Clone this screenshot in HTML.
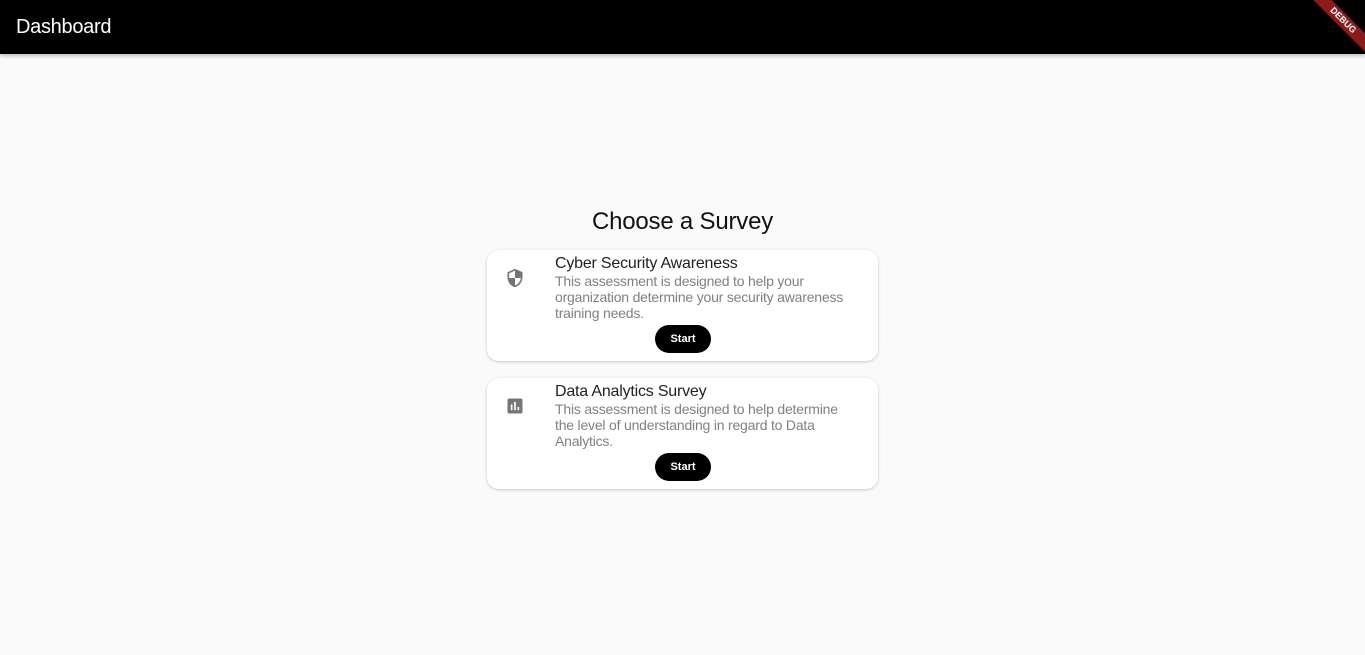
<!DOCTYPE html>
<html><head><style>
body{margin:0;width:1365px;height:655px;background:#fafafa;font-family:"Liberation Sans",sans-serif;overflow:hidden;position:relative}
.bar{position:absolute;left:0;top:0;width:1365px;height:54px;background:#000;box-shadow:0 2px 4px rgba(0,0,0,.25)}
.bar span{position:absolute;left:16px;top:16px;color:#fff;font-size:20px;letter-spacing:-0.3px}
.ribbon{position:absolute;right:-28px;top:14px;width:100px;height:13px;background:#8b1a1a;transform:rotate(45deg);color:#fff;font-size:9px;font-weight:bold;text-align:center;line-height:13px}
h1{position:absolute;left:0;width:1365px;top:208px;margin:0;text-align:center;font-weight:normal;font-size:24px;color:#111;letter-spacing:-0.2px}
.card{position:absolute;left:487px;width:391px;height:111px;background:#fff;border-radius:12px;box-shadow:0 1px 3px rgba(0,0,0,.2)}
.t{position:absolute;left:68px;top:5px;font-size:16px;color:#222;letter-spacing:-0.2px}
.d{position:absolute;left:68px;top:23px;width:305px;font-size:14px;line-height:16px;color:#808080;letter-spacing:-0.2px}
.btn{position:absolute;left:168px;top:75px;width:56px;height:28px;border-radius:14px;background:#000;color:#fff;font-size:11px;font-weight:bold;text-align:center;line-height:28px}
svg{position:absolute;left:18px;top:17px}
</style></head><body>
<div class="bar"><span>Dashboard</span></div>
<div class="ribbon">DEBUG</div>
<h1>Choose a Survey</h1>
<div class="card" style="top:250px">
<svg width="20" height="22" viewBox="0 0 24 24"><path d="M12 1L3 5v6c0 5.5 3.8 10.7 9 12 5.2-1.3 9-6.5 9-12V5l-9-4zm0 11h7c-.5 4.1-3.3 7.8-7 8.9V12H5V6.3l7-3.1V12z" fill="#757575"/></svg>
<div class="t">Cyber Security Awareness</div>
<div class="d">This assessment is designed to help your organization determine your security awareness training needs.</div>
<div class="btn">Start</div></div>
<div class="card" style="top:378px">
<svg width="20" height="22" viewBox="0 0 24 24"><path d="M19 3H5c-1.1 0-2 .9-2 2v14c0 1.1.9 2 2 2h14c1.1 0 2-.9 2-2V5c0-1.1-.9-2-2-2zM9 17H7v-7h2v7zm4 0h-2V7h2v10zm4 0h-2v-4h2v4z" fill="#757575"/></svg>
<div class="t">Data Analytics Survey</div>
<div class="d">This assessment is designed to help determine<br>the level of understanding in regard to Data Analytics.</div>
<div class="btn">Start</div></div>
</body></html>
